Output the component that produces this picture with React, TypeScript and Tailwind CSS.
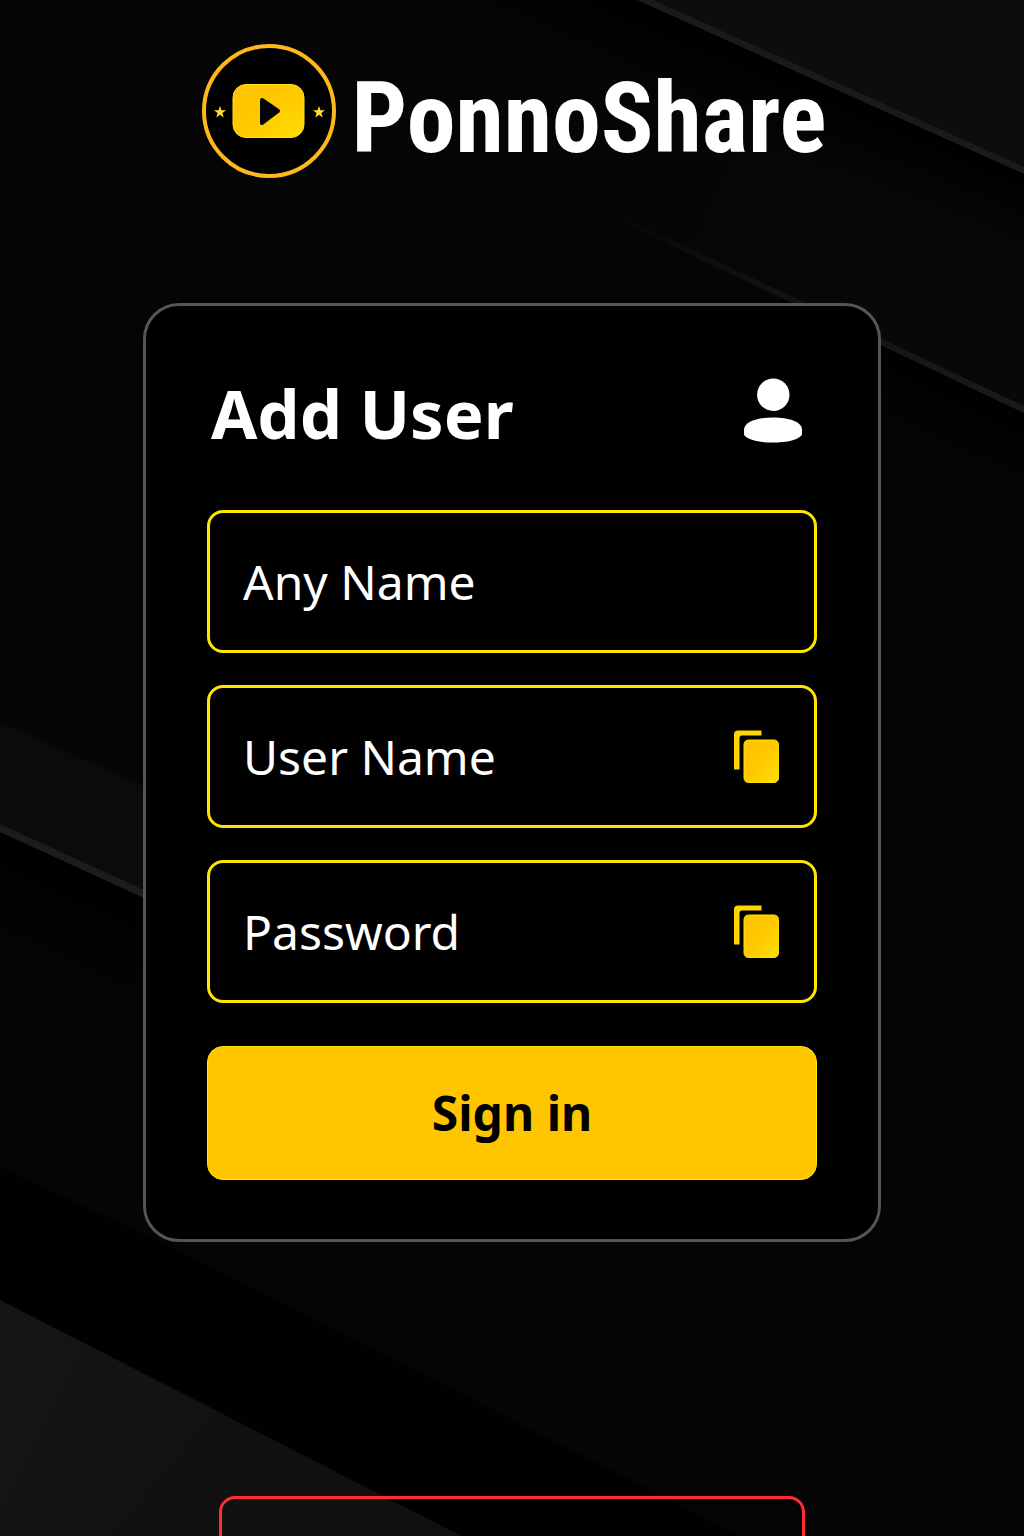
import { useState } from 'react';

function Backdrop() {
  return (
    <svg
      className="absolute inset-0 w-full h-full"
      viewBox="0 0 1024 1536"
      preserveAspectRatio="xMidYMid slice"
      aria-hidden="true"
    >
      <defs>
        <linearGradient id="shadow" gradientUnits="userSpaceOnUse" x1="800" y1="75" x2="765" y2="153">
          <stop offset="0" stopColor="#000000" />
          <stop offset="1" stopColor="#000000" stopOpacity="0" />
        </linearGradient>
        <linearGradient id="shadowRight" gradientUnits="userSpaceOnUse" x1="900" y1="351" x2="862" y2="431">
          <stop offset="0" stopColor="#000000" />
          <stop offset="1" stopColor="#000000" stopOpacity="0" />
        </linearGradient>
        <linearGradient id="shadowLeft" gradientUnits="userSpaceOnUse" x1="60" y1="860" x2="8" y2="974">
          <stop offset="0" stopColor="#000000" />
          <stop offset="1" stopColor="#000000" stopOpacity="0" />
        </linearGradient>
        <linearGradient id="panel" gradientUnits="userSpaceOnUse" x1="640" y1="150" x2="900" y2="270">
          <stop offset="0" stopColor="#080808" stopOpacity="0" />
          <stop offset="1" stopColor="#080808" />
        </linearGradient>
        <linearGradient id="edge" gradientUnits="userSpaceOnUse" x1="610" y1="208" x2="1024" y2="410">
          <stop offset="0" stopColor="#141414" stopOpacity="0" />
          <stop offset="0.4" stopColor="#121212" />
          <stop offset="1" stopColor="#1a1a1a" />
        </linearGradient>
        <linearGradient id="corner" gradientUnits="userSpaceOnUse" x1="0" y1="1340" x2="400" y2="1536">
          <stop offset="0" stopColor="#151515" />
          <stop offset="1" stopColor="#101010" />
        </linearGradient>
        {/* shared by the logo and the copy icons */}
        <linearGradient id="gold" x1="0" y1="0" x2="1" y2="1">
          <stop offset="0" stopColor="#ffc400" />
          <stop offset="0.5" stopColor="#ffc800" />
          <stop offset="1" stopColor="#ffe000" />
        </linearGradient>
      </defs>
      <rect width="1024" height="1536" fill="#050505" />

      {/* top right panels */}
      <path d="M400 0 H637 L1024 174 V408 L400 112 Z" fill="url(#panel)" />
      <path d="M637 0 L1024 174 V300 L357 0 Z" fill="url(#shadow)" />
      <path d="M650 0 L1024 168 V0 Z" fill="#0d0d0d" />
      <path d="M637 0 H653 L1024 167 V174 Z" fill="#1a1a1a" />
      <path d="M780 296 L1024 412 V560 L780 440 Z" fill="url(#shadowRight)" />
      <path d="M600 206 L1024 406 V413 L600 212 Z" fill="url(#edge)" />

      {/* left panel */}
      <path d="M0 832 L240 942 V1100 L0 990 Z" fill="url(#shadowLeft)" />
      <path d="M0 722 L240 828 V940 L0 830 Z" fill="#0b0b0b" />
      <path d="M0 824 L240 934 V942 L0 832 Z" fill="#1c1c1c" />

      {/* bottom stripes */}
      <path d="M0 1167 L178 1250 L656 1493 L738 1536 H461 L0 1300 Z" fill="#010101" />
      <path d="M0 1300 L461 1536 H0 Z" fill="url(#corner)" />
      <path d="M216 1411 L461 1536 H110 Z" fill="#111111" />
    </svg>
  );
}

function Logo() {
  return (
    <svg className="w-[134px] h-[134px] shrink-0" viewBox="0 0 134 134" aria-hidden="true">
      <circle cx="67" cy="67" r="65" fill="#000000" stroke="#ffb81c" strokeWidth="4" />
      <rect x="31" y="40.500" width="71" height="53" rx="13" fill="url(#gold)" stroke="#ffe11a" strokeWidth="1" />
      <path d="M60 56 L76 67 L60 79 Z" fill="#050505" stroke="#050505" strokeWidth="4" strokeLinejoin="round" />
      <path
        d="M18 62 L19.500 66.200 L24 66.300 L20.400 69 L21.700 73.400 L18 70.800 L14.300 73.400 L15.600 69 L12 66.300 L16.500 66.200 Z"
        fill="#ffdf2b"
      />
      <path
        d="M117 62 L118.500 66.200 L123 66.300 L119.400 69 L120.700 73.400 L117 70.800 L113.300 73.400 L114.600 69 L111 66.300 L115.500 66.200 Z"
        fill="#ffdf2b"
      />
    </svg>
  );
}

function UserIcon() {
  return (
    <svg className="w-[60px] h-[66px] shrink-0" viewBox="0 0 60 66" fill="#ffffff" aria-hidden="true">
      <circle cx="30.300" cy="16.700" r="16.200" />
      <path d="M1 51 C2 43.500 14 39.500 30 39.500 C46 39.500 58 43.500 59 51 V56 C59 57 58.500 57.500 58 58 C53 62.500 43 64.500 30 64.500 C17 64.500 7 62.500 2 58 C1.500 57.500 1 57 1 56 Z" />
    </svg>
  );
}

function CopyIcon() {
  return (
    <svg className="w-[46px] h-[54px]" viewBox="0 0 46 54" aria-hidden="true">
      <path d="M1 39.500 V4.500 Q1 0.500 5 0.500 H28.500 V5.500 H9 Q6.500 5.500 6.500 8 V39.500 Z" fill="#ffd400" />
      <rect x="11" y="10" width="34.500" height="42.500" rx="4.500" fill="url(#gold)" stroke="#ffe100" strokeWidth="1" />
    </svg>
  );
}

interface FieldProps {
  label: string;
  value: string;
  onChange: (value: string) => void;
  type?: string;
  copyable?: boolean;
}

function Field({ label, value, onChange, type = 'text', copyable }: FieldProps) {
  return (
    <div className="flex items-center h-[143px] pl-[33px] pr-[35px] rounded-2xl border-3 border-[#ffe600] bg-black">
      <input
        type={type}
        aria-label={label}
        placeholder={label}
        value={value}
        onChange={(e) => onChange(e.target.value)}
        className="flex-1 min-w-0 h-full bg-transparent text-[48px] text-white placeholder:text-white outline-none"
      />
      {copyable && (
        <button type="button" aria-label={`Copy ${label}`} onClick={() => navigator.clipboard.writeText(value)}>
          <CopyIcon />
        </button>
      )}
    </div>
  );
}

export default function App() {
  const [name, setName] = useState('');
  const [userName, setUserName] = useState('');
  const [password, setPassword] = useState('');

  return (
    <div className="relative h-screen overflow-hidden bg-[#050505] text-white font-['Noto_Sans',sans-serif]">
      <Backdrop />

      <div className="relative flex flex-col items-center px-4 pt-11">
        <header className="flex items-center justify-center gap-4 pl-1">
          <Logo />
          <h1 className="pt-4 font-['Roboto_Condensed','Liberation_Sans_Narrow',sans-serif] font-bold text-[98px] leading-[116px]">
            PonnoShare
          </h1>
        </header>

        <form
          className="w-full max-w-[738px] mt-[125px] px-[61px] pt-[61px] pb-[59px] rounded-[36px] border-3 border-[#555555] bg-black"
          onSubmit={(e) => e.preventDefault()}
        >
          <div className="flex items-center justify-between h-[88px] mb-[55px] pl-1 pr-[14px]">
            <h2 className="pt-1 text-[67px] leading-[88px] font-bold">Add User</h2>
            <UserIcon />
          </div>

          <div className="flex flex-col gap-8">
            <Field label="Any Name" value={name} onChange={setName} />
            <Field label="User Name" value={userName} onChange={setUserName} copyable />
            <Field label="Password" type="password" value={password} onChange={setPassword} copyable />
          </div>

          <button
            type="submit"
            className="w-full h-[134px] mt-[43px] rounded-2xl border border-[#ffe600] bg-[#ffc600] text-black text-[48px] font-bold"
          >
            Sign in
          </button>
        </form>

        {/* Message panel, runs past the fold */}
        <section className="w-full max-w-[586px] h-40 mt-[254px] rounded-2xl border-3 border-[#ff2d2d]" />
      </div>
    </div>
  );
}
